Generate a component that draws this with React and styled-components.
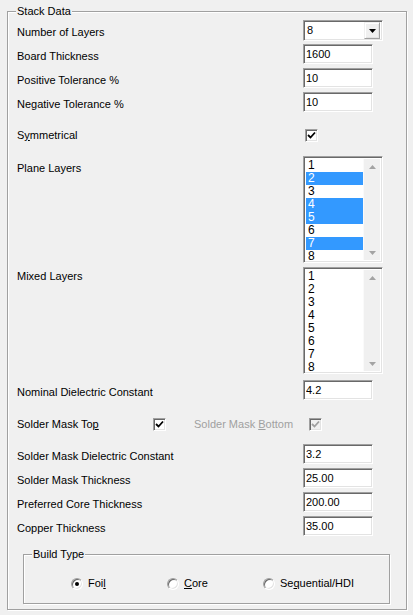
import React from "react"
import styled, { createGlobalStyle } from "styled-components"

const GlobalStyle = createGlobalStyle`
    html, body {
        margin: 0;
        padding: 0;
        background: #f0f0f0;
    }

    body {
        font-family: "Liberation Sans", Arial, sans-serif;
        font-size: 11px;
        color: #000;
    }
`

const planeLayers = [
    { n: 1 }, { n: 2, sel: true }, { n: 3 }, { n: 4, sel: true },
    { n: 5, sel: true }, { n: 6 }, { n: 7, sel: true }, { n: 8 },
]

const mixedLayers = [1, 2, 3, 4, 5, 6, 7, 8].map(n => ({ n }))

const bottomFields = [
    { label: 'Solder Mask Dielectric Constant', value: '3.2' },
    { label: 'Solder Mask Thickness', value: '25.00' },
    { label: 'Preferred Core Thickness', value: '200.00' },
    { label: 'Copper Thickness', value: '35.00' },
]

const Check = ({ disabled }) => (
    <CheckBox $disabled={disabled}>
        <svg width="9" height="9" viewBox="0 0 9 9">
            <path d="M1 4 L3.5 6.5 L8 1.5" fill="none" stroke={disabled ? '#a0a0a0' : '#000'} strokeWidth="1.8" />
        </svg>
    </CheckBox>
)

const ListBox = ({ items }) => (
    <List>
        <Items>
            {items.map(it => (
                <Item key={it.n} $selected={it.sel}>{it.n}</Item>
            ))}
        </Items>
        <ScrollBar>
            <Arrow viewBox="0 0 7 4"><path d="M0 4 L3.5 0 L7 4 Z" /></Arrow>
            <Arrow viewBox="0 0 7 4"><path d="M0 0 L3.5 4 L7 0 Z" /></Arrow>
        </ScrollBar>
    </List>
)

export default function App() {
    return (
        <Window>
            <GlobalStyle />
            <GroupBox>
                <Legend>Stack Data</Legend>

                <Row>
                    <Label>Number of Layers</Label>
                    <Combo>
                        <ComboValue>8</ComboValue>
                        <DropButton>
                            <svg width="7" height="4" viewBox="0 0 7 4"><path d="M0 0 L3.5 4 L7 0 Z" fill="#000" /></svg>
                        </DropButton>
                    </Combo>
                </Row>
                <Row>
                    <Label>Board Thickness</Label>
                    <TextBox readOnly defaultValue="1600" />
                </Row>
                <Row>
                    <Label>Positive Tolerance %</Label>
                    <TextBox readOnly defaultValue="10" />
                </Row>
                <Row>
                    <Label>Negative Tolerance %</Label>
                    <TextBox readOnly defaultValue="10" />
                </Row>

                <Row $top={7}>
                    <Label>S<u>y</u>mmetrical</Label>
                    <CheckCell><Check /></CheckCell>
                </Row>

                <Row $top={9} $h={107}>
                    <Label $offset={6}>Plane Layers</Label>
                    <ListBox items={planeLayers} />
                </Row>
                <Row $top={4} $h={107}>
                    <Label $offset={3}>Mixed Layers</Label>
                    <ListBox items={mixedLayers} />
                </Row>

                <Row $top={6}>
                    <Label>Nominal Dielectric Constant</Label>
                    <TextBox readOnly defaultValue="4.2" />
                </Row>

                <MaskRow>
                    <Label>Solder Mask To<u>p</u></Label>
                    <Check />
                    <Label $disabled>Solder Mask <u>B</u>ottom</Label>
                    <Check disabled />
                </MaskRow>

                {bottomFields.map((f, i) => (
                    <Row key={f.label} $top={i === 0 ? 8 : 0}>
                        <Label>{f.label}</Label>
                        <TextBox readOnly defaultValue={f.value} />
                    </Row>
                ))}

                <BuildGroup>
                    <Legend>Build Type</Legend>
                    <RadioRow>
                        <RadioItem>
                            <Radio $checked />
                            <span>Foi<u>l</u></span>
                        </RadioItem>
                        <RadioItem>
                            <Radio />
                            <span><u>C</u>ore</span>
                        </RadioItem>
                        <RadioItem>
                            <Radio />
                            <span>Se<u>q</u>uential/HDI</span>
                        </RadioItem>
                    </RadioRow>
                </BuildGroup>
            </GroupBox>
        </Window>
    )
}

const Window = styled.div`
    width: 413px;
    height: 615px;
    padding: 11px 0 0 7px;
    box-sizing: border-box;
`

const GroupBox = styled.div`
    position: relative;
    width: 400px;
    box-sizing: border-box;
    border: 1px solid #a0a0a0;
    box-shadow: 1px 1px 0 #fff, inset 1px 1px 0 #fff;
    padding: 8px 0 5px 9px;
`

const Legend = styled.span`
    position: absolute;
    top: -7px;
    left: 8px;
    padding: 0 1px;
    line-height: 13px;
    background: #f0f0f0;
`

const Row = styled.div`
    display: grid;
    grid-template-columns: 286px auto;
    align-items: start;
    height: ${p => p.$h || 24}px;
    margin-top: ${p => p.$top || 0}px;
`

const Label = styled.span`
    line-height: 13px;
    padding-top: ${p => p.$offset ?? 6}px;
    color: ${p => p.$disabled ? '#a0a0a0' : '#000'};
    white-space: nowrap;
`

const sunken = `
    box-sizing: border-box;
    border-style: solid;
    border-width: 1px;
    border-color: #a0a0a0 #fff #fff #a0a0a0;
    box-shadow: inset 1px 1px 0 #696969, inset -1px -1px 0 #e3e3e3;
    background: #fff;
`

const TextBox = styled.input`
    ${sunken}
    width: 70px;
    height: 20px;
    margin: 0;
    padding: 0 2px;
    font-family: "Liberation Sans", Arial, sans-serif;
    font-size: 11px;
    color: #000;
    outline: none;
`

const Combo = styled.div`
    ${sunken}
    display: flex;
    align-items: center;
    justify-content: space-between;
    width: 80px;
    height: 21px;
    padding: 2px;
`

const ComboValue = styled.span`
    padding-left: 1px;
    line-height: 13px;
`

const DropButton = styled.div`
    display: flex;
    align-items: center;
    justify-content: center;
    box-sizing: border-box;
    width: 16px;
    height: 17px;
    background: #f0f0f0;
    border-style: solid;
    border-width: 1px;
    border-color: #f0f0f0 #a0a0a0 #a0a0a0 #f0f0f0;
    box-shadow: inset 1px 1px 0 #fff, inset -1px -1px 0 #e3e3e3;
`

const CheckCell = styled.div`
    padding: 6px 0 0 2px;
`

const CheckBox = styled.div`
    display: flex;
    align-items: center;
    justify-content: center;
    box-sizing: border-box;
    width: 13px;
    height: 13px;
    border-style: solid;
    border-width: 1px;
    border-color: #a0a0a0 #fff #fff #a0a0a0;
    box-shadow: inset 1px 1px 0 #696969, inset -1px -1px 0 #e3e3e3;
    background: ${p => p.$disabled ? '#f0f0f0' : '#fff'};
`

const List = styled.div`
    ${sunken}
    display: flex;
    width: 80px;
    height: 107px;
    padding: 2px;
    overflow: hidden;
`

const Items = styled.div`
    flex: 1;
`

const Item = styled.div`
    height: 13px;
    line-height: 13px;
    padding-left: 2px;
    font-size: 12px;
    background: ${p => p.$selected ? '#3399ff' : 'transparent'};
    color: ${p => p.$selected ? '#fff' : '#000'};
`

const ScrollBar = styled.div`
    display: flex;
    flex-direction: column;
    justify-content: space-between;
    align-items: center;
    width: 17px;
    padding: 6px 0 5px;
    box-sizing: border-box;
    background: #f0f0f0;
    border-left: 1px solid #fafafa;
`

const Arrow = styled.svg`
    width: 7px;
    height: 4px;
    fill: #a3a3a3;
`

const MaskRow = styled.div`
    display: grid;
    grid-template-columns: 136px 13px 126px 13px;
    align-items: start;
    height: 24px;
    margin-top: 8px;

    & > ${CheckBox} {
        margin-top: 6px;
    }

    & > ${Label}:nth-of-type(2) {
        margin-left: 28px;
        width: 98px;
    }

    & > ${CheckBox}:last-child {
        margin-left: 17px;
    }
`

const BuildGroup = styled.div`
    position: relative;
    box-sizing: border-box;
    width: 367px;
    height: 50px;
    margin: 14px 0 0 6px;
    border: 1px solid #a0a0a0;
    box-shadow: 1px 1px 0 #fff, inset 1px 1px 0 #fff;
    padding: 22px 0 0 47px;
`

const RadioRow = styled.div`
    display: flex;
    align-items: center;
    height: 13px;
`

const RadioItem = styled.label`
    display: flex;
    align-items: center;
    gap: 5px;
    width: 96px;
    line-height: 13px;
    white-space: nowrap;
`

const Radio = styled.span`
    position: relative;
    flex: none;
    box-sizing: border-box;
    width: 12px;
    height: 12px;
    border-radius: 50%;
    background: #fff;
    border: 1px solid;
    border-color: #a0a0a0 #fff #fff #a0a0a0;
    box-shadow: inset 1px 1px 0 #696969, inset -1px -1px 0 #e3e3e3;

    &::after {
        content: '';
        display: ${p => p.$checked ? 'block' : 'none'};
        position: absolute;
        left: 3px;
        top: 3px;
        width: 4px;
        height: 4px;
        border-radius: 50%;
        background: #000;
    }
`
